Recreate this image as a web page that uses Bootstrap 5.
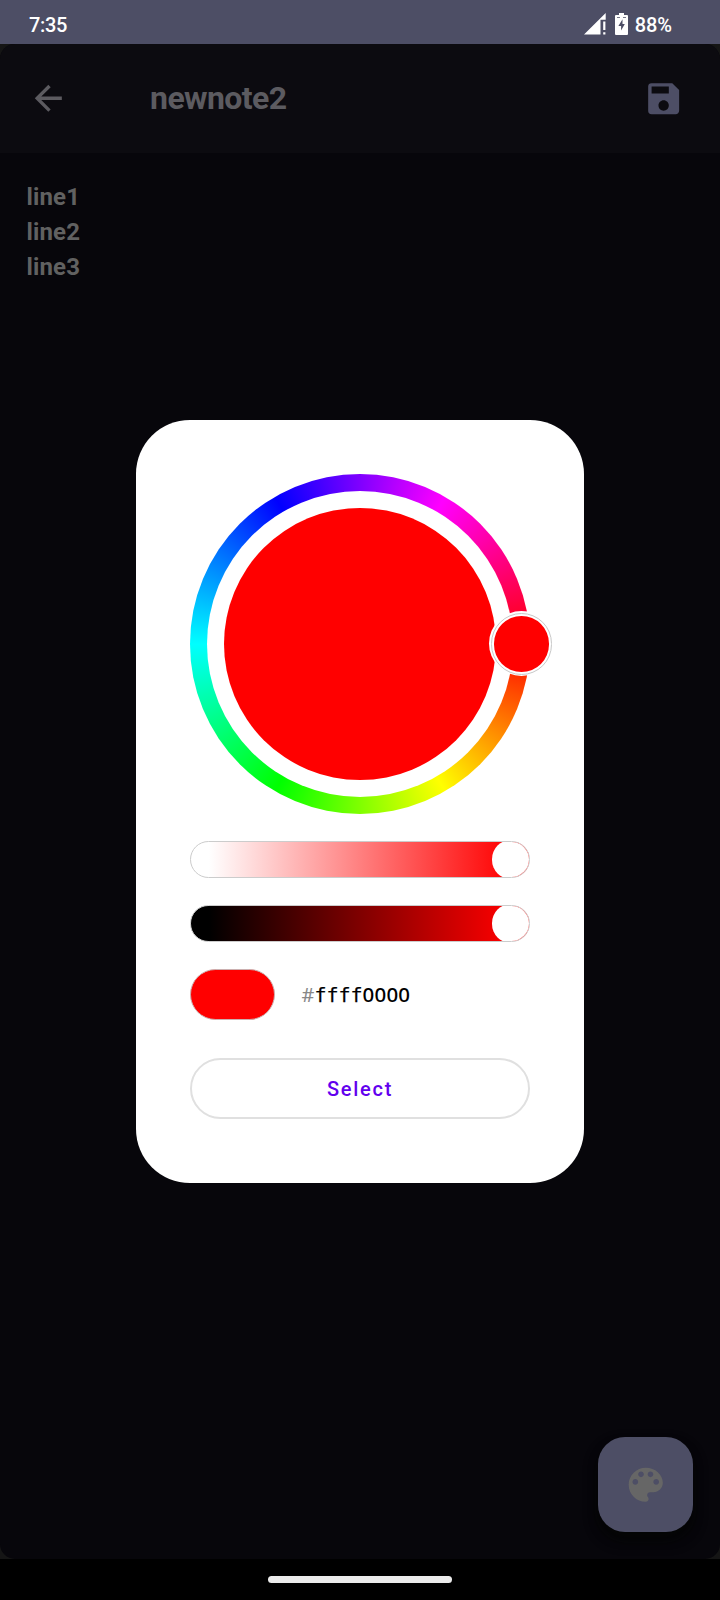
<!DOCTYPE html>
<html lang="en">
<head>
<meta charset="utf-8">
<meta name="viewport" content="width=device-width, initial-scale=1">
<title>newnote2</title>
<link href="https://cdn.jsdelivr.net/npm/bootstrap@5.3.0/dist/css/bootstrap.min.css" rel="stylesheet">
<style>
body{font-family:Roboto,sans-serif;background:#151515;width:720px;height:1600px;overflow:hidden;line-height:1.2}
svg{display:block}
.statusbar{height:44px;background:#4d4e65;color:#fff;font-size:20px;font-weight:500;line-height:20px;padding:0 48px 0 29px}
.clock{letter-spacing:-.3px;padding-top:15px}
.pct{margin-left:7px;padding-top:15px;letter-spacing:-.1px}
.sysicon{margin-top:12px}
.battery{margin-left:7.500px;margin-top:13px}
.screen{height:1515px;background:#07060b;border-radius:15px;overflow:hidden}
.appbar{height:109px;background:#0c0b10;color:#5c5b60;padding:0 36px 0 28px}
.title{font-size:32px;font-weight:700;letter-spacing:-.6px;margin-left:81.500px}
.note{font-size:24px;font-weight:700;line-height:35px;color:#616161;letter-spacing:.15px;padding:27px 26.500px}
.picker{width:448px;height:763px;left:136px;top:420px;border-radius:54px;padding:54px;background:#fff}
.wheel{width:340px;height:340px;padding:17px;background:conic-gradient(from 90deg,#f00,#ff0,#0f0,#0ff,#00f,#f0f,#f00)}
.wheel-gap{padding:17px;background:#fff}
.disc{background:#f00}
.knob{width:65px;height:65px;left:299px;top:137.3px;background:#fff;padding:1.7px}
.knob-line{border:1px solid #c8c8c8;padding:2.1px}
.track{height:37px;border:1px solid #ccc;overflow:hidden}
.sat{background:linear-gradient(90deg,#fff 18px,#f00 320px);margin-top:27px}
.val{background:linear-gradient(90deg,#000 18px,#f00 320px);margin-top:27px}
.thumb{width:38.500px;height:38.500px;margin:-1.800px -1px 0 0;background:#fff}
.swatch{width:85px;height:51px;background:#f00;border:1px solid #ccb0b0;border-radius:26px}
.swatch-row{margin-top:27px}
.hex{margin:-1px 0 0 26.500px;font-family:"DejaVu Sans Mono",monospace;font-size:20px;color:#000;line-height:24px}
.hash{color:#888;font-family:"Noto Sans",sans-serif;font-size:20px}
.ff{-webkit-text-stroke:.25px #000}
.digits{font-family:"Noto Sans",sans-serif;font-size:20.500px;font-weight:500;letter-spacing:.2px}
.select{height:61px;border:2px solid #e0e0e0;color:#6200ee;font-size:20px;font-weight:500;letter-spacing:1.75px;margin-top:38px}
.select:hover{border-color:#e0e0e0;color:#6200ee}
.fab{width:95px;height:95px;right:27px;top:1437px;border-radius:27px;background:#4d4e65;box-shadow:0 8px 14px #05050580,0 7px 10px #040505}
.gesture{height:41px;background:#000;padding-top:17px}
.pill{width:184px;height:7px;background:#ebebeb}
</style>
</head>
<body class="position-relative m-0">
<header class="statusbar d-flex justify-content-between align-items-start">
  <span class="clock">7:35</span>
  <div class="d-flex align-items-start">
    <svg class="sysicon" width="24" height="24" viewBox="0 0 24 24" fill="#fff"><path d="M1 22.500 22.700 1V7.800H17.500V22.500Z"/><path d="M20.200 9.500h2.200v8.500h-2.200zM20.200 20.200h2.200v2.300h-2.200z"/></svg>
    <svg class="battery" width="13" height="22" viewBox="0 0 13 22" fill="#fff"><path fill-rule="evenodd" d="M4 0H9V2H12Q13 2 13 3V21Q13 22 12 22H1Q0 22 0 21V3Q0 2 1 2H4ZM7.500 6.300 3.400 13H6.100V17.600L9.800 11H7.500Z"/><path d="M2 4.500h3M8 4.500h3" stroke="#777889" stroke-width="1"/></svg>
    <span class="pct">88%</span>
  </div>
</header>
<main class="screen">
  <nav class="appbar d-flex align-items-center">
    <svg width="40.6" height="40.6" viewBox="0 0 24 24" fill="currentColor"><path d="M20 11H7.830l5.590-5.590L12 4l-8 8 8 8 1.410-1.410L7.830 13H20z"/></svg>
    <h1 class="title mb-0">newnote2</h1>
    <svg class="ms-auto" width="41.3" height="41.3" viewBox="0 0 24 24" fill="#4d4e65"><path d="M17 3H5a2 2 0 0 0-2 2v14a2 2 0 0 0 2 2h14c1.100 0 2-.9 2-2V7zm-5 16c1.660 0 3-1.340 3-3s-1.340-3-3-3-3 1.340-3 3 1.340 3 3 3zm3-10H5V5h10z" transform="translate(0 0)" fill-rule="evenodd"/></svg>
  </nav>
  <div class="note">line1<br>line2<br>line3</div>
</main>
<button class="fab btn border-0 p-0 position-absolute d-flex align-items-center justify-content-center" aria-label="Color">
  <svg width="45.5" height="45.5" viewBox="0 0 24 24" fill="#666"><path d="M12 3c-4.970 0-9 4.030-9 9s4.030 9 9 9c.83 0 1.500-.67 1.500-1.500 0-.39-.15-.74-.39-1.010-.23-.26-.38-.61-.38-.99 0-.83.67-1.500 1.500-1.500H16c2.760 0 5-2.240 5-5 0-4.420-4.030-8-9-8zm-5.500 9c-.83 0-1.500-.67-1.500-1.500S5.670 9 6.500 9 8 9.670 8 10.500 7.330 12 6.500 12zm3-4C8.670 8 8 7.330 8 6.500S8.670 5 9.500 5s1.500.67 1.500 1.500S10.330 8 9.500 8zm5 0c-.83 0-1.500-.67-1.500-1.500S13.670 5 14.500 5s1.500.67 1.500 1.500S15.330 8 14.500 8zm3 4c-.83 0-1.500-.67-1.500-1.500S16.670 9 17.500 9s1.500.67 1.500 1.500-.67 1.500-1.500 1.500z"/></svg>
</button>
<footer class="gesture d-flex justify-content-center"><div class="pill rounded-pill"></div></footer>

<section class="picker position-absolute" role="dialog">
  <div class="wheel rounded-circle position-relative">
    <div class="wheel-gap rounded-circle h-100"><div class="disc rounded-circle h-100"></div></div>
    <div class="knob rounded-circle position-absolute">
      <div class="knob-line rounded-circle h-100"><div class="disc rounded-circle h-100"></div></div>
    </div>
  </div>
  <div class="track sat rounded-pill d-flex justify-content-end"><div class="thumb rounded-circle flex-shrink-0"></div></div>
  <div class="track val rounded-pill d-flex justify-content-end"><div class="thumb rounded-circle flex-shrink-0"></div></div>
  <div class="swatch-row d-flex align-items-center">
    <div class="swatch"></div>
    <div class="hex"><span class="hash">#</span><span class="ff">ffff</span><span class="digits">0000</span></div>
  </div>
  <button class="select btn rounded-pill w-100 p-0">Select</button>
</section>
<script src="https://cdn.jsdelivr.net/npm/bootstrap@5.3.0/dist/js/bootstrap.bundle.min.js"></script>
</body>
</html>
